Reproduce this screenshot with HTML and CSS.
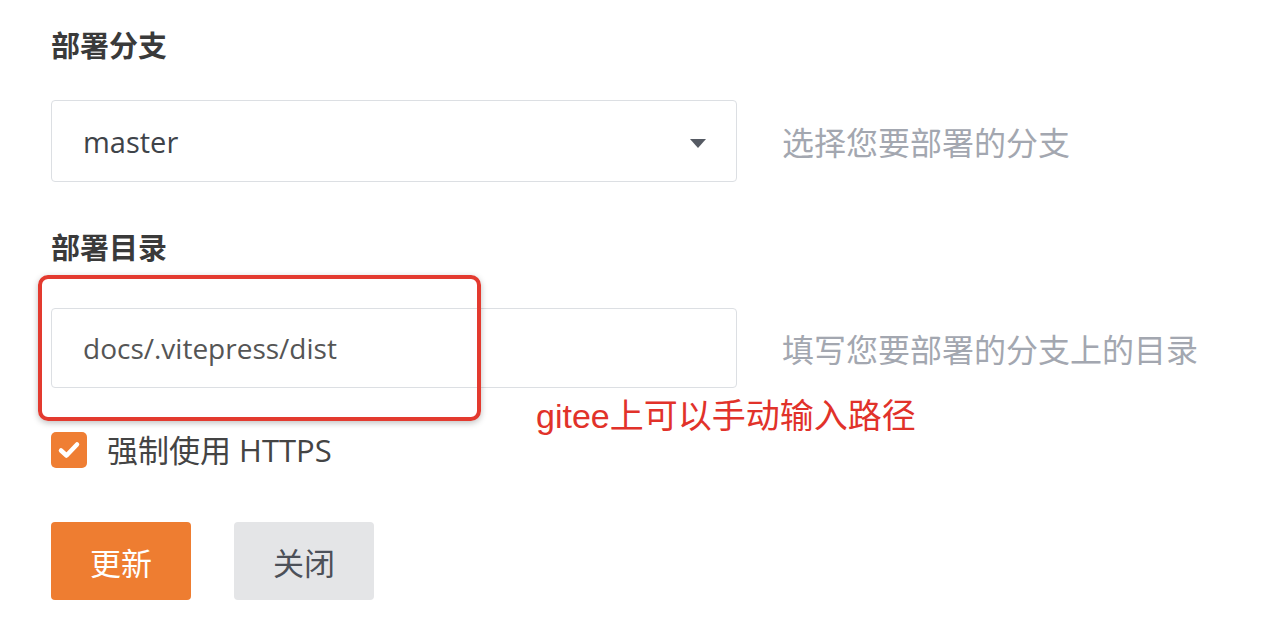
FILE: index.html
```html
<!DOCTYPE html>
<html lang="zh-CN">
<head>
<meta charset="utf-8">
<title>部署</title>
<link rel="stylesheet" href="styles.css">
</head>
<body>
<div class="form">
  <div class="label">部署分支</div>
  <div class="row">
    <div class="control select">
      <span class="value">master</span>
      <svg class="caret" width="16" height="9" viewBox="0 0 16 9"><path d="M0 0 H16 L8 9 Z" fill="#555a63"/></svg>
    </div>
    <div class="help">选择您要部署的分支</div>
  </div>

  <div class="label label2">部署目录</div>
  <div class="row row2">
    <div class="control input">
      <span class="value value-input">docs/.vitepress/dist</span>
    </div>
    <div class="help">填写您要部署的分支上的目录</div>
    <div class="highlight"></div>
    <div class="note">gitee上可以手动输入路径</div>
  </div>

  <label class="check">
    <span class="box">
      <svg width="24" height="20" viewBox="0 0 24 20"><path d="M4 10.5 L9.5 15.5 L20 4.5" fill="none" stroke="#fff" stroke-width="4.5" stroke-linecap="round" stroke-linejoin="round"/></svg>
    </span>
    <span class="check-text">强制使用 HTTPS</span>
  </label>

  <div class="buttons">
    <button class="btn primary">更新</button>
    <button class="btn secondary">关闭</button>
  </div>
</div>
</body>
</html>
```

FILE: styles.css
```css
html, body {
  margin: 0;
  padding: 0;
  background: #ffffff;
}
body {
  width: 1272px;
  height: 632px;
  overflow: hidden;
  font-family: "Open Sans", "Noto Sans CJK SC", sans-serif;
}
.form {
  padding: 22px 0 0 51px;
  display: flex;
  flex-direction: column;
  align-items: flex-start;
}
.label {
  font-family: "Noto Sans CJK SC", sans-serif;
  font-size: 29px;
  line-height: 44px;
  font-weight: 700;
  color: #3a3a3a;
  margin-bottom: 34px;
}
.label2 {
  margin-top: 42px;
  margin-bottom: 40px;
}
.row {
  display: flex;
  align-items: center;
  gap: 45px;
  position: relative;
}
.control {
  box-sizing: border-box;
  width: 686px;
  height: 82px;
  border: 1px solid #dcdfe3;
  border-radius: 4px;
  display: flex;
  align-items: center;
  padding: 0 30px 0 31px;
  background: #fff;
}
.input {
  height: 80px;
}
.select {
  justify-content: space-between;
}
.value {
  font-family: "Open Sans", "Noto Sans CJK SC", sans-serif;
  font-size: 29px;
  color: #3e4349;
}
.value-input {
  font-size: 28px;
  color: #555;
}
.caret {
  display: block;
  margin-top: 4px;
}
.help {
  font-family: "Noto Sans CJK SC", sans-serif;
  font-size: 32px;
  color: #a3a7b0;
}
.highlight {
  position: absolute;
  left: -13px;
  top: -33px;
  width: 443px;
  height: 146px;
  box-sizing: border-box;
  border: 4px solid #e33a2f;
  border-radius: 10px;
  box-shadow: 0 2px 6px rgba(0,0,0,0.25);
}
.note {
  position: absolute;
  left: 485px;
  top: 86px;
  font-family: "Liberation Sans", "Noto Sans CJK SC", sans-serif;
  font-size: 34px;
  line-height: 44px;
  color: #e1322a;
  white-space: nowrap;
}
.check {
  margin-top: 42px;
  display: flex;
  align-items: center;
  gap: 20px;
}
.box {
  width: 36px;
  height: 36px;
  border-radius: 5px;
  background: #ef7e33;
  display: flex;
  align-items: center;
  justify-content: center;
}
.box svg {
  display: block;
}
.check-text {
  font-family: "Open Sans", "Noto Sans CJK SC", sans-serif;
  font-size: 31px;
  line-height: 40px;
  color: #444;
}
.buttons {
  margin-top: 52px;
  display: flex;
  gap: 43px;
}
.btn {
  width: 140px;
  height: 78px;
  border: none;
  border-radius: 4px;
  font-family: "Noto Sans CJK SC", sans-serif;
  font-size: 31px;
  padding: 0;
}
.primary {
  background: #ee7d31;
  color: #ffffff;
}
.secondary {
  background: #e4e5e7;
  color: #4c5058;
}
```
